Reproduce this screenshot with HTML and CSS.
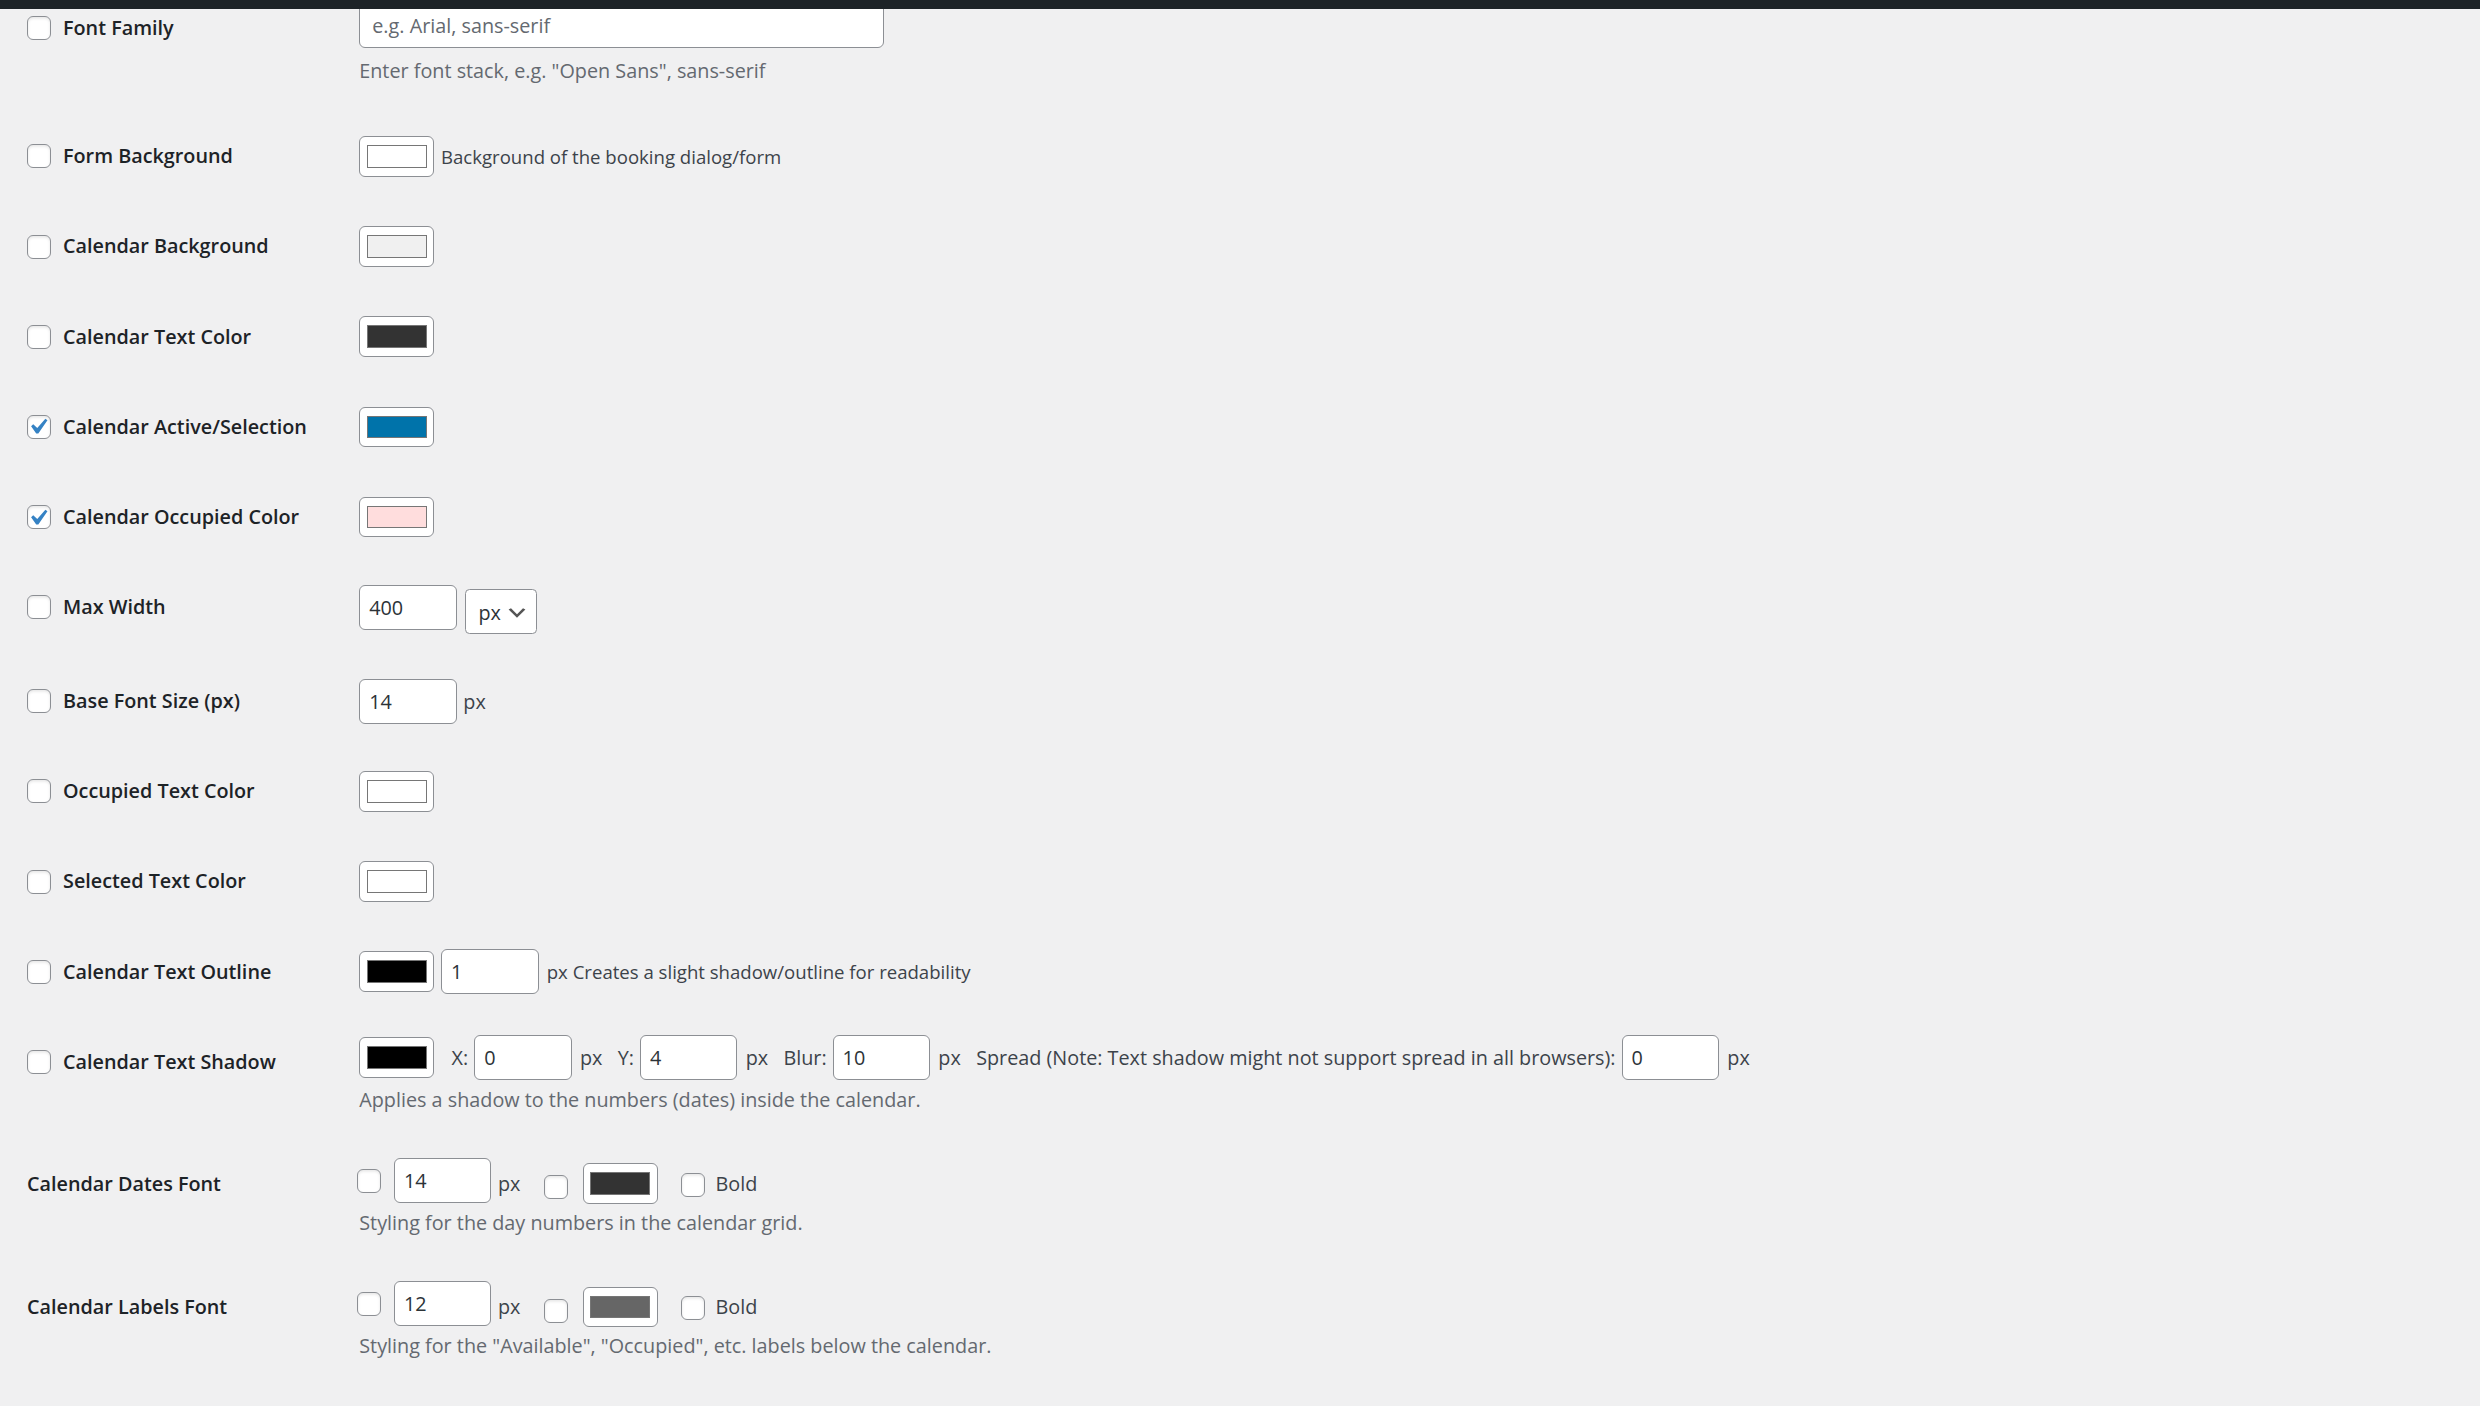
FILE: index.html
```html
<!DOCTYPE html>
<html lang="en">
<head>
<meta charset="utf-8">
<title>Booking Calendar Styling</title>
<link rel="stylesheet" href="styles.css">
</head>
<body>
<div class="adminbar"></div>
<div class="wrap">
  <div class="form-table">

    <div class="row multi first">
      <div class="th"><label class="opt"><span class="cb"></span>Font Family</label></div>
      <div class="td">
        <div class="line"><input type="text" class="text-in regular-text" placeholder="e.g. Arial, sans-serif"></div>
        <p class="description">Enter font stack, e.g. "Open Sans", sans-serif</p>
      </div>
    </div>

    <div class="row">
      <div class="th"><label class="opt"><span class="cb"></span>Form Background</label></div>
      <div class="td">
        <div class="line"><span class="color"><span class="sw sw-white"></span></span><span class="note small ml-sw">Background of the booking dialog/form</span></div>
      </div>
    </div>

    <div class="row">
      <div class="th"><label class="opt"><span class="cb"></span>Calendar Background</label></div>
      <div class="td">
        <div class="line"><span class="color"><span class="sw sw-light"></span></span></div>
      </div>
    </div>

    <div class="row">
      <div class="th"><label class="opt"><span class="cb"></span>Calendar Text Color</label></div>
      <div class="td">
        <div class="line"><span class="color"><span class="sw sw-dark"></span></span></div>
      </div>
    </div>

    <div class="row">
      <div class="th"><label class="opt"><span class="cb"><svg viewBox="0 0 20 20"><path d="M14.83 4.89l1.34.94-5.81 8.38H9.02L5.78 9.67l1.34-1.25 2.57 2.4z"/></svg></span>Calendar Active/Selection</label></div>
      <div class="td">
        <div class="line"><span class="color"><span class="sw sw-blue"></span></span></div>
      </div>
    </div>

    <div class="row">
      <div class="th"><label class="opt"><span class="cb"><svg viewBox="0 0 20 20"><path d="M14.83 4.89l1.34.94-5.81 8.38H9.02L5.78 9.67l1.34-1.25 2.57 2.4z"/></svg></span>Calendar Occupied Color</label></div>
      <div class="td">
        <div class="line"><span class="color"><span class="sw sw-pink"></span></span></div>
      </div>
    </div>

    <div class="row">
      <div class="th"><label class="opt"><span class="cb"></span>Max Width</label></div>
      <div class="td">
        <div class="line top"><input type="text" class="text-in small-text" value="400"><span class="select ml-sel"><span>px</span><svg viewBox="0 0 20 20"><path d="M5 6l5 5 5-5 2 1-7 7-7-7 2-1z"/></svg></span></div>
      </div>
    </div>

    <div class="row">
      <div class="th"><label class="opt"><span class="cb"></span>Base Font Size (px)</label></div>
      <div class="td">
        <div class="line"><input type="text" class="text-in small-text" value="14"><span class="note ml-px">px</span></div>
      </div>
    </div>

    <div class="row">
      <div class="th"><label class="opt"><span class="cb"></span>Occupied Text Color</label></div>
      <div class="td">
        <div class="line"><span class="color"><span class="sw sw-white"></span></span></div>
      </div>
    </div>

    <div class="row">
      <div class="th"><label class="opt"><span class="cb"></span>Selected Text Color</label></div>
      <div class="td">
        <div class="line"><span class="color"><span class="sw sw-white"></span></span></div>
      </div>
    </div>

    <div class="row">
      <div class="th"><label class="opt"><span class="cb"></span>Calendar Text Outline</label></div>
      <div class="td">
        <div class="line"><span class="color"><span class="sw sw-black"></span></span><input type="text" class="text-in small-text ml-sw" value="1"><span class="note small ml-unit">px Creates a slight shadow/outline for readability</span></div>
      </div>
    </div>

    <div class="row multi">
      <div class="th"><label class="opt"><span class="cb"></span>Calendar Text Shadow</label></div>
      <div class="td">
        <div class="line">
          <span class="color"><span class="sw sw-black"></span></span>
          <span class="note ml-first">X:</span><input type="text" class="text-in small-text ml-in" value="0"><span class="note ml-unit">px</span>
          <span class="note ml-grp">Y:</span><input type="text" class="text-in small-text ml-in" value="4"><span class="note ml-unit">px</span>
          <span class="note ml-grp">Blur:</span><input type="text" class="text-in small-text ml-in" value="10"><span class="note ml-unit">px</span>
          <span class="note ml-grp">Spread (Note: Text shadow might not support spread in all browsers):</span><input type="text" class="text-in small-text ml-in" value="0"><span class="note ml-unit">px</span>
        </div>
        <p class="description">Applies a shadow to the numbers (dates) inside the calendar.</p>
      </div>
    </div>

    <div class="row multi">
      <div class="th plain">Calendar Dates Font</div>
      <div class="td">
        <div class="line">
          <span class="cb cb-lead"></span><input type="text" class="text-in small-text ml-after-cb" value="14"><span class="note ml-px sh2">px</span>
          <span class="cb ml-cb2 sh4"></span><span class="color ml-col sh2"><span class="sw sw-dark"></span></span>
          <span class="cb ml-cb3 sh3"></span><span class="note ml-bold sh2">Bold</span>
        </div>
        <p class="description">Styling for the day numbers in the calendar grid.</p>
      </div>
    </div>

    <div class="row multi">
      <div class="th plain">Calendar Labels Font</div>
      <div class="td">
        <div class="line">
          <span class="cb cb-lead"></span><input type="text" class="text-in small-text ml-after-cb" value="12"><span class="note ml-px sh2">px</span>
          <span class="cb ml-cb2 sh4"></span><span class="color ml-col sh2"><span class="sw sw-grey"></span></span>
          <span class="cb ml-cb3 sh3"></span><span class="note ml-bold sh2">Bold</span>
        </div>
        <p class="description">Styling for the "Available", "Occupied", etc. labels below the calendar.</p>
      </div>
    </div>

  </div>
</div>
</body>
</html>
```

FILE: styles.css
```css
* { box-sizing: border-box; }

html, body {
  margin: 0;
  padding: 0;
  background: #f0f0f1;
}

body {
  font-family: "Open Sans", "Noto Sans", "DejaVu Sans", sans-serif;
  color: #3c434a;
  overflow: hidden;
}

.adminbar {
  position: fixed;
  top: 0;
  left: 0;
  right: 0;
  height: 9px;
  background: #1d2327;
  z-index: 5;
}

.wrap {
  zoom: 1.5;
  padding-left: 18px;
  margin-top: -11.5px;
  font-size: 13.2px;
  line-height: 18.2px;
}

.row {
  display: grid;
  grid-template-columns: 211.5px 1fr;
}

.th {
  align-self: start;
  padding: 20px 10px 20px 0;
  font-weight: 600;
  color: #1d2327;
  line-height: 20.1px;
}

.th.plain {
  line-height: 18.2px;
}

.td {
  align-self: center;
  padding: 15px 10px;
}

.row.multi .td {
  padding: 12px 10px 18px;
}

.row.first .td {
  padding: 13.5px 10px 18px;
}

.opt {
  display: flex;
  align-items: center;
}

.cb {
  display: block;
  flex: none;
  width: 16px;
  height: 16px;
  border: 1px solid #8c8f94;
  border-radius: 4px;
  background: #fff;
  box-shadow: inset 0 1px 2px rgba(0, 0, 0, 0.1);
}

.opt .cb {
  margin-right: 8px;
}

.cb svg {
  display: block;
  width: 21px;
  height: 21px;
  margin: -3px 0 0 -4px;
  fill: #3582c4;
}

.line {
  display: flex;
  align-items: center;
  min-height: 30px;
  white-space: nowrap;
}

.line.top {
  align-items: flex-start;
}

.text-in {
  font-family: inherit;
  font-size: 13.2px;
  height: 30px;
  margin: 0;
  padding: 0 8px;
  border: 1px solid #8c8f94;
  border-radius: 4px;
  background: #fff;
  color: #2c3338;
  line-height: 28px;
  box-shadow: none;
  outline: none;
  flex: none;
}

.text-in::placeholder {
  color: #646970;
  opacity: 1;
}

.regular-text { width: 350px; }

.small-text {
  width: 65px;
  padding: 0 6px;
}

.description {
  margin: 4px 0 0;
  color: #646970;
  line-height: 18.2px;
}

.row.first .description { margin-top: 6px; }

.note { color: #3c434a; }

.note.small { font-size: 12.4px; }

.color {
  flex: none;
  width: 50px;
  height: 27px;
  border: 1px solid #8c8f94;
  border-radius: 4px;
  background: #fff;
  display: flex;
  align-items: center;
  justify-content: center;
}

.sw {
  width: 40px;
  height: 15px;
  border: 1px solid #767676;
}

.sw-white { background: #ffffff; }
.sw-light { background: #f0f0f0; }
.sw-dark  { background: #333333; }
.sw-blue  { background: #0073aa; }
.sw-pink  { background: #ffdddd; }
.sw-black { background: #000000; }
.sw-grey  { background: #666666; }

.select {
  flex: none;
  display: flex;
  align-items: center;
  justify-content: space-between;
  width: 48px;
  height: 30px;
  margin-top: 2.7px;
  padding: 2px 5px 0 8px;
  border: 1px solid #8c8f94;
  border-radius: 3px;
  background: #fff;
  color: #2c3338;
}

.select svg {
  width: 16px;
  height: 16px;
  fill: #555;
  margin-top: 1px;
}

/* horizontal spacing */
.ml-sw { margin-left: 4.5px; }
.ml-sel { margin-left: 5.8px; }
.ml-px { margin-left: 4.4px; }
.ml-unit { margin-left: 5.5px; }
.ml-first { margin-left: 11.5px; }
.ml-grp { margin-left: 10.2px; }
.ml-in { margin-left: 4px; }
.cb-lead { margin-left: -1.5px; }
.ml-after-cb { margin-left: 8.6px; }
.ml-cb2 { margin-left: 16px; }
.ml-col { margin-left: 9.5px; }
.ml-cb3 { margin-left: 15.3px; }
.ml-bold { margin-left: 7.3px; }

/* small vertical nudges within a line */
.sh2 { margin-top: 2px; margin-bottom: -2px; }
.sh3 { margin-top: 3px; margin-bottom: -3px; }
.sh4 { margin-top: 4.5px; margin-bottom: -4.5px; }
```
